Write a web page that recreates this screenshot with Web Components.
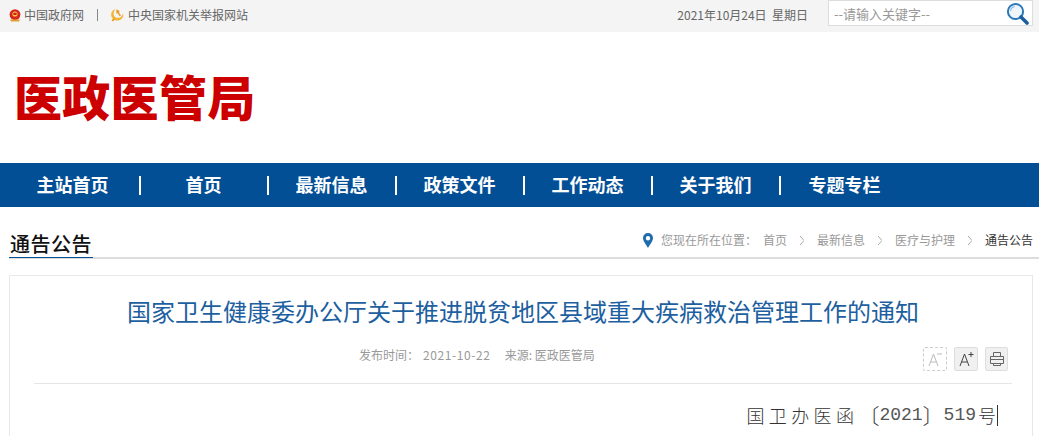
<!DOCTYPE html>
<html lang="zh">
<head>
<meta charset="utf-8">
<title>医政医管局</title>
<style>
  html, body { margin: 0; height: 436px; overflow: hidden; background: #fff; }
  body { font-family: "Noto Sans CJK SC", "Liberation Sans", sans-serif; }
</style>
</head>
<body>
<top-bar></top-bar>
<site-logo>医政医管局</site-logo>
<main-nav>
  <nav-item>主站首页</nav-item>
  <nav-item>首页</nav-item>
  <nav-item>最新信息</nav-item>
  <nav-item>政策文件</nav-item>
  <nav-item>工作动态</nav-item>
  <nav-item>关于我们</nav-item>
  <nav-item>专题专栏</nav-item>
</main-nav>
<section-head>通告公告</section-head>
<article-card>
  <span slot="title">国家卫生健康委办公厅关于推进脱贫地区县域重大疾病救治管理工作的通知</span>
  <doc-number></doc-number>
</article-card>

<script>
class TopBar extends HTMLElement {
  connectedCallback() {
    this.attachShadow({ mode: 'open' });
    this.shadowRoot.innerHTML = `
      <style>
        :host {
          display: flex;
          align-items: flex-start;
          height: 32px;
          background: #f4f4f4;
          color: #666;
          font-size: 12px;
          line-height: 29px;
          padding: 0 6px 0 9px;
        }
        a { display: flex; align-items: center; gap: 3px; height: 29px; color: inherit; }
        svg { display: block; flex: none; }
        .sep { width: 1px; height: 12px; background: #888; margin: 9px 12px 0 13px; }
        .gov svg { margin-top: 1px; }
        .party { gap: 4px; }
        .date { margin-left: auto; margin-right: 20px; white-space: pre; }
        .search {
          height: 24px;
          border: 1px solid #ddd;
          background: #fff;
          display: flex;
          align-items: center;
          justify-content: space-between;
          padding: 0 3px 0 5px;
          width: 195px;
          font-size: 13px;
          line-height: 23px;
          color: #999;
        }
      </style>
      <a class="gov">
        <svg width="12" height="13" viewBox="0 0 12 13">
          <circle cx="6" cy="5.6" r="5.4" fill="#d8261c"/>
          <circle cx="6" cy="5" r="2.6" fill="#f3c548"/>
          <rect x="4.4" y="3.8" width="3.2" height="2.2" fill="#c8201a"/>
          <path d="M1 10.5h10l-1 2H2z" fill="#e0a030"/>
        </svg>
        中国政府网
      </a>
      <span class="sep"></span>
      <a class="party">
        <svg width="14" height="14" viewBox="0 0 14 14">
          <path d="M5.500 1C2.500 2 .8 4.500 1.200 7.400c.5 3 3.400 5.400 6.600 5.100 1.800-.1 3.600-1 4.600-2.500 1-1.500 1.100-3.300.6-4.600-.6 2.500-2.300 4.100-4.500 4.400C6 10.100 4 8.700 3.700 6.400 3.400 4.500 4.200 2.500 5.500 1z" fill="#f2b632"/>
          <path d="M6.400 1.300 9.600 3.100 8.800 4.300 11 7.400 9.700 8.300 7.600 5.100 6.400 6z" fill="#e89a1c"/>
          <path d="M1.600 12l2.200-1.800 1.200 1.100L2.800 13.400z" fill="#e89a1c"/>
        </svg>
        中央国家机关举报网站
      </a>
      <span class="date">2021年10月24日  星期日</span>
      <div class="search">
        <span>--请输入关键字--</span>
        <svg width="23" height="23" viewBox="0 0 23 23">
          <circle cx="9.500" cy="9.500" r="7.600" fill="#eef5fb" stroke="#2a78b8" stroke-width="2"/>
          <path d="M4.500 9a5 5 0 0 1 4-4.300" fill="none" stroke="#8fc0e6" stroke-width="1.300"/>
          <path d="M15 15l6 6" stroke="#1b5f9e" stroke-width="3.600" stroke-linecap="round"/>
        </svg>
      </div>
    `;
  }
}
customElements.define('top-bar', TopBar);

class SiteLogo extends HTMLElement {
  connectedCallback() {
    this.attachShadow({ mode: 'open' });
    this.shadowRoot.innerHTML = `
      <style>
        :host {
          display: flex;
          align-items: center;
          height: 131px;
          padding-left: 14px;
          color: #cc0000;
          font-size: 48px;
          font-weight: 900;
          line-height: 50px;
          letter-spacing: .3px;
        }
        div { margin-bottom: 6px; }
      </style>
      <div><slot></slot></div>
    `;
  }
}
customElements.define('site-logo', SiteLogo);

class MainNav extends HTMLElement {
  connectedCallback() {
    this.attachShadow({ mode: 'open' });
    this.shadowRoot.innerHTML = `
      <style>
        :host {
          display: flex;
          align-items: center;
          height: 44px;
          padding-left: 13px;
          background: #034f96;
        }
      </style>
      <slot></slot>
    `;
  }
}
customElements.define('main-nav', MainNav);

class NavItem extends HTMLElement {
  connectedCallback() {
    this.attachShadow({ mode: 'open' });
    this.shadowRoot.innerHTML = `
      <style>
        :host {
          display: block;
          box-sizing: border-box;
          width: 128px;
          height: 19px;
          margin-top: 1px;
          padding-right: 1px;
          line-height: 16px;
          text-align: center;
          color: #fff;
          font-size: 18px;
          font-weight: 700;
          border-right: 2px solid #fff;
        }
        :host(:first-child) { text-indent: -6px; }
        :host(:last-child) { border-right: 0; }
      </style>
      <slot></slot>
    `;
  }
}
customElements.define('nav-item', NavItem);

class SectionHead extends HTMLElement {
  connectedCallback() {
    this.attachShadow({ mode: 'open' });
    this.shadowRoot.innerHTML = `
      <style>
        :host {
          display: flex;
          justify-content: space-between;
          align-items: flex-end;
          height: 50px;
          margin-left: 9px;
          padding-right: 6px;
          border-bottom: 2px solid #ddd;
        }
        h2 {
          margin: 0 0 -1px;
          padding: 0 1px;
          height: 26px;
          font-size: 20px;
          line-height: 25px;
          font-weight: 500;
          letter-spacing: .5px;
          color: #111;
          border-bottom: 1px solid #034f96;
        }
        .crumb {
          display: flex;
          align-items: center;
          height: 20px;
          margin-bottom: 7px;
          font-size: 12px;
          line-height: 20px;
          color: #999;
        }
        .pin { margin-right: 8px; display: block; }
        .here { margin-right: 6px; }
        .gt { margin: 0 13px; display: block; }
        b { font-weight: 400; color: #333; }
      </style>
      <h2><slot></slot></h2>
      <div class="crumb">
        <svg class="pin" width="10" height="15" viewBox="0 0 10 15">
          <path fill-rule="evenodd" d="M5 0a5 5 0 0 1 5 5c0 3.500-3.300 6.800-5 10C3.300 11.800 0 8.500 0 5a5 5 0 0 1 5-5zm0 3a2.200 2.200 0 1 0 0 4.400A2.200 2.200 0 0 0 5 3z" fill="#1f6cac"/>
        </svg>
        <span class="here">您现在所在位置：</span>
        <span>首页</span>
        <svg class="gt" width="4" height="9" viewBox="0 0 4 9"><path d="M0 0l4 4.500L0 9" fill="none" stroke="#aaa"/></svg>
        <span>最新信息</span>
        <svg class="gt" width="4" height="9" viewBox="0 0 4 9"><path d="M0 0l4 4.500L0 9" fill="none" stroke="#aaa"/></svg>
        <span>医疗与护理</span>
        <svg class="gt" width="4" height="9" viewBox="0 0 4 9"><path d="M0 0l4 4.500L0 9" fill="none" stroke="#aaa"/></svg>
        <b>通告公告</b>
      </div>
    `;
  }
}
customElements.define('section-head', SectionHead);

class ArticleCard extends HTMLElement {
  connectedCallback() {
    this.attachShadow({ mode: 'open' });
    this.shadowRoot.innerHTML = `
      <style>
        :host {
          display: block;
          width: 1024px;
          box-sizing: border-box;
          height: 200px;
          margin: 16px 0 0 9px;
          padding: 0 20px 0 24px;
          border: 1px solid #e8e8e8;
          color: #999;
        }
        h1 {
          margin: 0;
          padding-top: 18px;
          font-size: 24px;
          line-height: 34px;
          font-weight: 400;
          text-align: center;
          color: #1d5f9f;
        }
        .meta {
          display: flex;
          justify-content: space-between;
          height: 24px;
          margin-top: 19px;
          padding: 0 4px 0 325px;
          font-size: 12px;
        }
        .info { line-height: 16px; }
        .info span { margin-right: 4px; }
        .info .date { margin-right: 14px; letter-spacing: .6px; }
        .info span:last-child { margin-right: 0; }
        .tools { display: flex; gap: 7px; }
        .tools div {
          box-sizing: border-box;
          width: 24px;
          height: 24px;
          border: 1px solid #ddd;
          border-radius: 2px;
          background: #f0f0f0;
          display: flex;
          align-items: center;
          justify-content: center;
        }
        .tools div:last-child { width: 23px; }
        .tools .off { border: 1px dashed #ccc; background: #fff; }
        hr { border: 0; border-top: 1px solid #e6e6e6; margin: 12px 0 0; }
        .body { display: flex; justify-content: flex-end; padding: 19px 14px 0 0; }
      </style>
      <h1><slot name="title"></slot></h1>
      <div class="meta">
        <div class="info"><span>发布时间：</span><span class="date">2021-10-22</span><span>来源: 医政医管局</span></div>
        <div class="tools">
          <div class="off">
            <svg width="18" height="16" viewBox="0 0 18 16"><path d="M3 15L7.500 3 12 15M4.700 11h5.600" fill="none" stroke="#bbb"/><path d="M11 3h5" stroke="#bbb"/></svg>
          </div>
          <div>
            <svg width="18" height="16" viewBox="0 0 18 16"><path d="M3 15L7.500 3 12 15M4.700 11h5.600" fill="none" stroke="#444"/><path d="M11.500 3.500h5M14 1v5" stroke="#444"/></svg>
          </div>
          <div>
            <svg width="16" height="16" viewBox="0 0 16 16"><path d="M4.500 5V1.500h7V5M1.500 5.500h13v7h-13zM1.500 8.500h13M4.500 12.500v2h7v-2" fill="none" stroke="#666"/></svg>
          </div>
        </div>
      </div>
      <hr>
      <div class="body"><slot></slot></div>
    `;
  }
}
customElements.define('article-card', ArticleCard);

class DocNumber extends HTMLElement {
  connectedCallback() {
    this.attachShadow({ mode: 'open' });
    this.shadowRoot.innerHTML = `
      <style>
        :host {
          display: flex;
          align-items: center;
          height: 24px;
          color: #333;
          font-size: 18px;
          font-weight: 300;
          line-height: 24px;
        }
        .cn { letter-spacing: 4.400px; }
        .bk { font-size: 21px; }
        .num { font-family: "Liberation Mono", monospace; font-size: 18px; color: #555; }
        .hao { margin-left: 2px; font-size: 18px; }
        .caret { width: 1px; height: 21px; background: #333; margin-left: 1px; }
      </style>
      <span class="cn">国卫办医函</span><span class="bk">〔</span><span class="num">2021</span><span class="bk">〕</span><span class="num">519</span><span class="hao">号</span><span class="caret"></span>
    `;
  }
}
customElements.define('doc-number', DocNumber);
</script>
</body>
</html>
